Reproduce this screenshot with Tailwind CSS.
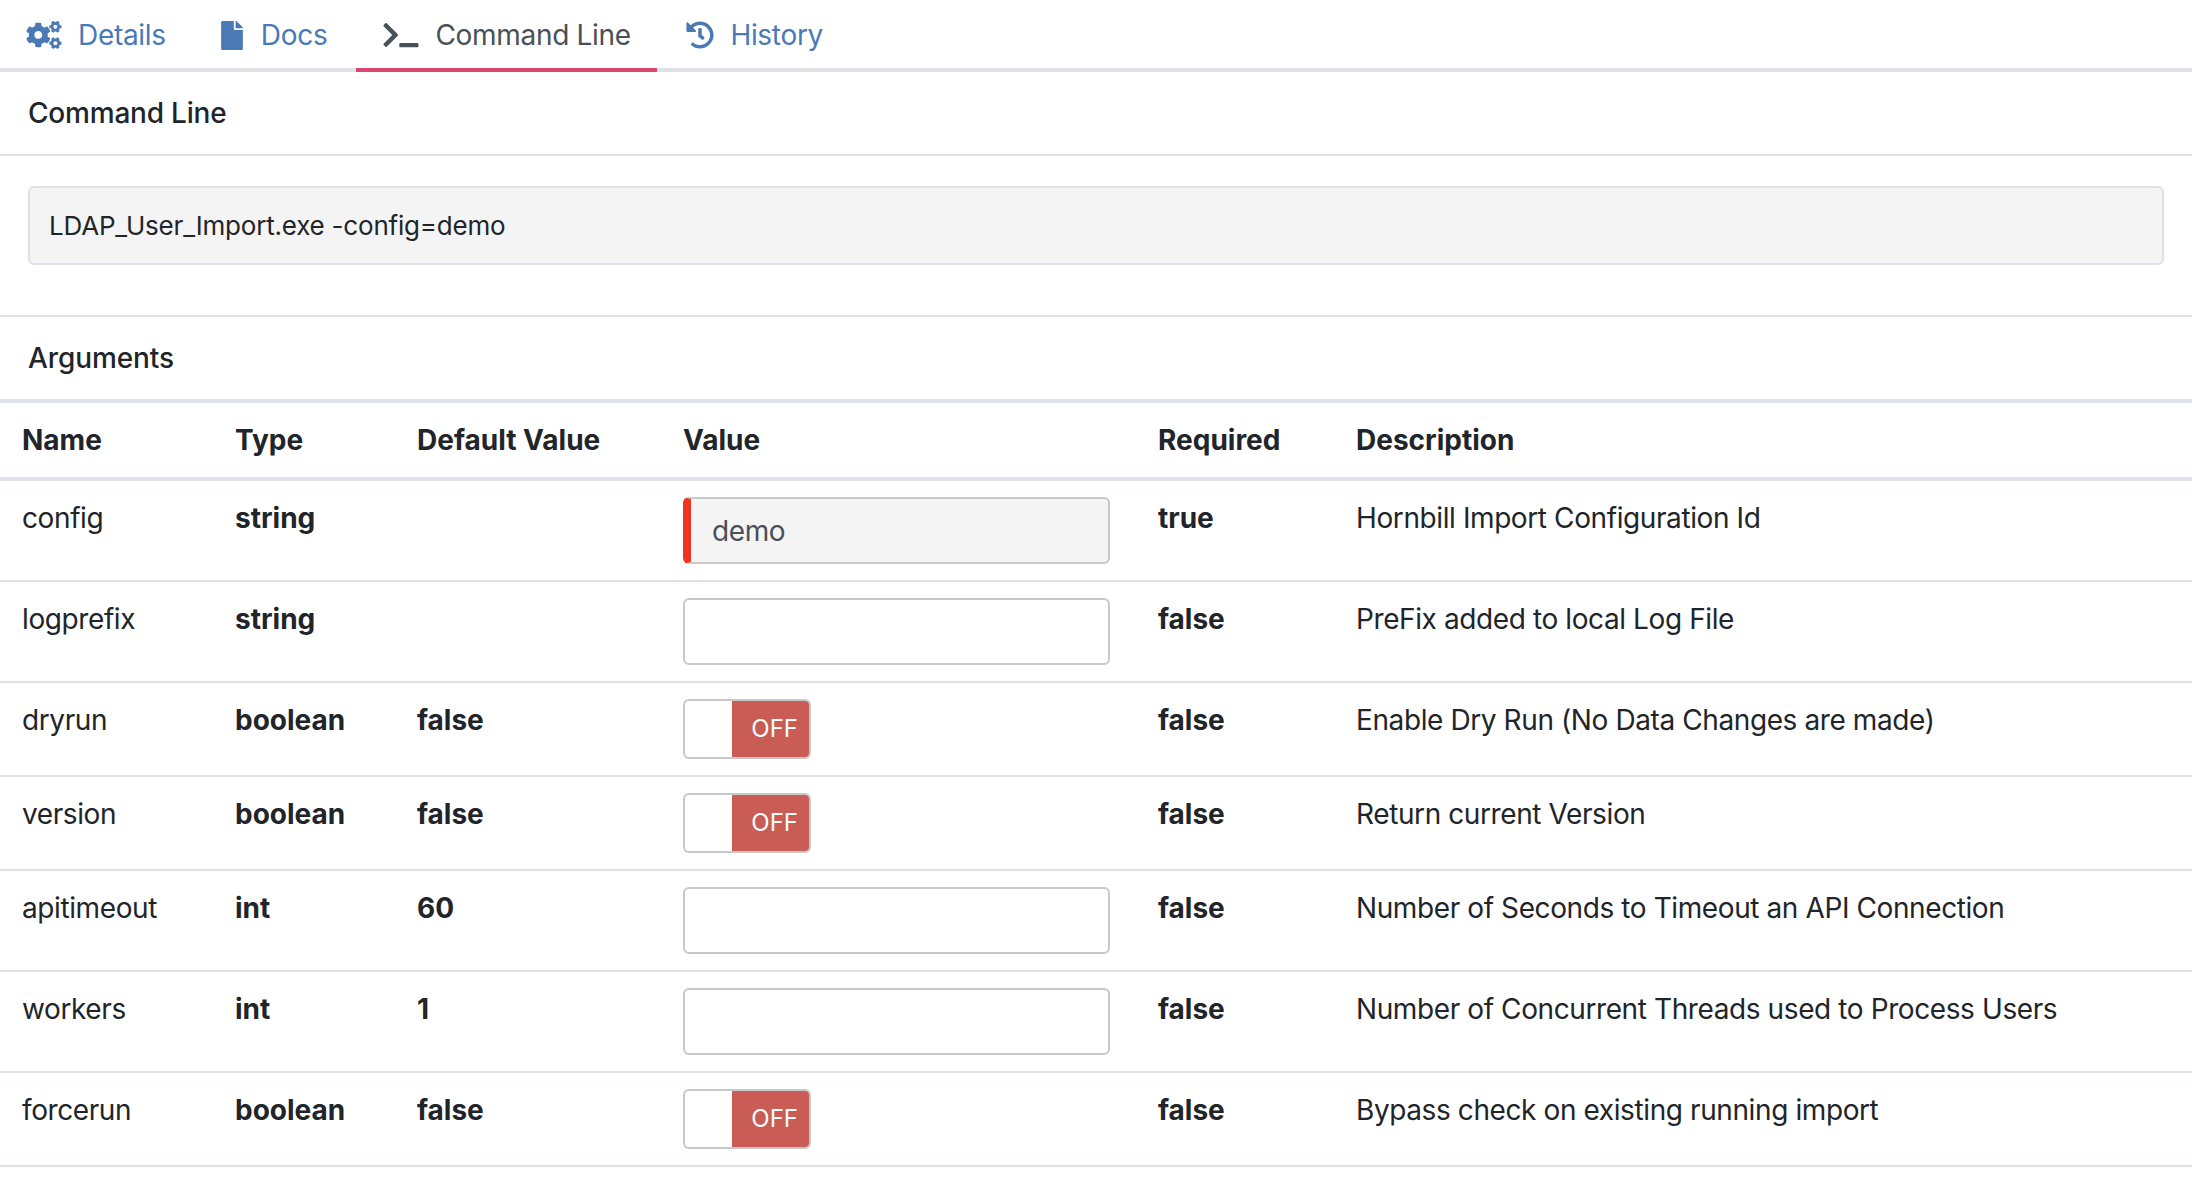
<!DOCTYPE html>
<html lang="en">
<head>
  <meta charset="UTF-8" />
  <title>Command Line</title>
  <script src="https://cdn.jsdelivr.net/npm/@tailwindcss/browser@4"></script>
</head>
<body class="bg-white text-[#212529] font-['Inter',sans-serif] text-[28px] leading-[42px]">

  <!-- tabs -->
  <div class="flex h-[72px] border-b-4 border-[#dee2e6] tracking-[-0.3px]">
    <a class="flex items-center h-[70px] pl-[26px] pr-[28px] gap-[16px] text-[#4a7ab5]">
      <svg class="w-[36px] h-[28px] fill-current" viewBox="0 0 640 512"><path d="M512.1 191l-8.2 14.3c-3 5.3-9.4 7.5-15.1 5.4-11.8-4.4-22.6-10.7-32.1-18.6-4.6-3.8-5.8-10.5-2.8-15.7l8.2-14.3c-6.9-8-12.3-17.3-15.9-27.4h-16.5c-6 0-11.2-4.3-12.2-10.3-2-12-2.1-24.6 0-37.1 1-6 6.2-10.4 12.2-10.4h16.5c3.6-10.1 9-19.4 15.9-27.4l-8.2-14.3c-3-5.2-1.9-11.9 2.8-15.7 9.5-7.9 20.4-14.2 32.1-18.6 5.7-2.1 12.1.1 15.1 5.4l8.2 14.3c10.5-1.9 21.2-1.9 31.7 0L552 6.3c3-5.3 9.4-7.5 15.1-5.4 11.8 4.4 22.6 10.7 32.1 18.6 4.6 3.8 5.8 10.5 2.8 15.7l-8.2 14.3c6.9 8 12.3 17.3 15.9 27.4h16.5c6 0 11.2 4.3 12.2 10.3 2 12 2.1 24.6 0 37.1-1 6-6.2 10.4-12.2 10.4h-16.5c-3.6 10.1-9 19.4-15.9 27.4l8.2 14.3c3 5.2 1.9 11.9-2.8 15.7-9.5 7.9-20.4 14.2-32.1 18.6-5.7 2.1-12.1-.1-15.1-5.4l-8.2-14.3c-10.4 1.9-21.2 1.9-31.7 0zm-10.5-58.8c38.5 29.6 82.4-14.3 52.8-52.8-38.5-29.7-82.4 14.3-52.8 52.8zM386.3 286.1l33.7 16.8c10.1 5.8 14.5 18.1 10.5 29.1-8.9 24.2-26.4 46.4-42.6 65.8-7.4 8.9-20.2 11.1-30.3 5.3l-29.1-16.8c-16 13.7-34.6 24.6-54.9 31.7v33.6c0 11.6-8.3 21.6-19.7 23.6-24.6 4.2-50.4 4.4-75.9 0-11.5-2-20-11.9-20-23.6V418c-20.3-7.2-38.9-18-54.9-31.7L74 403c-10 5.8-22.9 3.6-30.3-5.3-16.2-19.4-33.3-41.6-42.2-65.7-4-10.9.4-23.2 10.5-29.1l33.3-16.8c-3.9-20.9-3.9-42.4 0-63.4L12 205.8c-10.1-5.8-14.6-18.1-10.5-29 8.9-24.2 26-46.4 42.2-65.8 7.4-8.9 20.2-11.1 30.3-5.3l29.1 16.8c16-13.7 34.6-24.6 54.9-31.7V57.1c0-11.5 8.2-21.5 19.6-23.5 24.6-4.2 50.5-4.4 76-.1 11.5 2 20 11.9 20 23.6v33.6c20.3 7.2 38.9 18 54.9 31.7l29.1-16.8c10-5.8 22.9-3.6 30.3 5.3 16.2 19.4 33.2 41.6 42.1 65.8 4 10.9.1 23.2-10 29.1l-33.7 16.8c3.9 21 3.9 42.5 0 63.5zm-117.6 21.1c59.2-77-28.7-164.9-105.7-105.7-59.2 77 28.7 164.9 105.7 105.7zm243.4 182.7l-8.2 14.3c-3 5.3-9.4 7.5-15.1 5.4-11.8-4.4-22.6-10.7-32.1-18.6-4.6-3.8-5.8-10.5-2.8-15.7l8.2-14.3c-6.9-8-12.3-17.3-15.9-27.4h-16.5c-6 0-11.2-4.3-12.2-10.3-2-12-2.1-24.6 0-37.1 1-6 6.2-10.4 12.2-10.4h16.5c3.6-10.1 9-19.4 15.9-27.4l-8.2-14.3c-3-5.2-1.9-11.9 2.8-15.7 9.5-7.9 20.4-14.2 32.1-18.6 5.7-2.1 12.1.1 15.1 5.4l8.2 14.3c10.5-1.9 21.2-1.9 31.7 0l8.2-14.3c3-5.3 9.4-7.5 15.1-5.4 11.8 4.4 22.6 10.7 32.1 18.6 4.6 3.8 5.8 10.5 2.8 15.7l-8.2 14.3c6.9 8 12.3 17.3 15.9 27.4h16.5c6 0 11.2 4.3 12.2 10.3 2 12 2.1 24.6 0 37.1-1 6-6.2 10.4-12.2 10.4h-16.5c-3.6 10.1-9 19.4-15.9 27.4l8.2 14.3c3 5.2 1.9 11.9-2.8 15.7-9.5 7.9-20.4 14.2-32.1 18.6-5.7 2.1-12.1-.1-15.1-5.4l-8.2-14.3c-10.4 1.9-21.2 1.9-31.7 0zM501.6 431c38.5 29.6 82.4-14.3 52.8-52.8-38.5-29.6-82.4 14.3-52.8 52.8z"/></svg>
      <span>Details</span>
    </a>
    <a class="flex items-center h-[70px] pl-[27px] pr-[29px] gap-[18px] text-[#4a7ab5]">
      <svg class="w-[22px] h-[29px] fill-current" viewBox="0 0 384 512"><path d="M224 136V0H24C10.7 0 0 10.7 0 24v464c0 13.3 10.7 24 24 24h336c13.3 0 24-10.7 24-24V160H248c-13.2 0-24-10.8-24-24zm160-14.1v6.1H256V0h6.1c6.4 0 12.5 2.5 17 7l97.9 98c4.5 4.5 7 10.6 7 16.9z"/></svg>
      <span>Docs</span>
    </a>
    <a class="flex items-center h-[72px] w-[301px] pt-[2px] pl-[27px] gap-[16px] text-[#495057] border-b-4 border-[#d9476f]">
      <svg class="w-[36px] h-[28px] fill-current" viewBox="0 0 640 512"><path d="M257.981 272.971L63.638 467.314c-9.373 9.373-24.569 9.373-33.941 0L7.029 444.647c-9.357-9.357-9.375-24.522-.04-33.901L161.011 256 6.99 101.255c-9.335-9.379-9.317-24.544.04-33.901l22.667-22.667c9.373-9.373 24.569-9.373 33.941 0L257.981 239.03c9.373 9.372 9.373 24.568 0 33.941zM640 456v-32c0-13.255-10.745-24-24-24H312c-13.255 0-24 10.745-24 24v32c0 13.255 10.745 24 24 24h304c13.255 0 24-10.745 24-24z"/></svg>
      <span>Command Line</span>
    </a>
    <a class="flex items-center h-[70px] pl-[29px] gap-[16px] text-[#4a7ab5]">
      <svg class="w-[28px] h-[28px] fill-current" viewBox="0 0 512 512"><path d="M504 255.531c.253 136.64-111.18 248.372-247.82 248.468-59.015.042-113.223-20.53-155.822-54.911-11.077-8.94-11.905-25.541-1.839-35.607l11.267-11.267c8.609-8.609 22.353-9.551 31.891-1.984C173.062 425.135 212.781 440 256 440c101.705 0 184-82.311 184-184 0-101.705-82.311-184-184-184-48.814 0-93.149 18.969-126.068 49.932l50.754 50.754c10.08 10.08 2.941 27.314-11.313 27.314H24c-8.837 0-16-7.163-16-16V38.627c0-14.254 17.234-21.393 27.314-11.314l49.372 49.372C129.209 34.136 189.552 8 256 8c136.81 0 247.747 110.78 248 247.531zm-180.912 78.784l9.823-12.63c8.138-10.463 6.253-25.542-4.21-33.679L288 256.349V152c0-13.255-10.745-24-24-24h-16c-13.255 0-24 10.745-24 24v135.651l65.409 50.874c10.463 8.137 25.541 6.253 33.679-4.21z"/></svg>
      <span>History</span>
    </a>
  </div>

  <!-- command line -->
  <div class="h-[84px] px-[28px] flex items-center font-medium tracking-[-0.2px] border-b-2 border-[#dee2e6]">Command Line</div>
  <div class="h-[161px] px-[28px] pt-[30px] border-b-2 border-[#dee2e6]">
    <div class="h-[79px] flex items-center px-[19px] bg-[#f4f4f4] border-2 border-[#dee2e6] rounded-[6px] text-[26px] tracking-[-0.2px]">LDAP_User_Import.exe -config=demo</div>
  </div>

  <!-- arguments -->
  <div class="h-[82px] px-[28px] flex items-center font-medium tracking-[-0.1px]">Arguments</div>
  <table class="w-full table-fixed border-t-4 border-[#dee2e6]">
    <colgroup>
      <col class="w-[213px]" /><col class="w-[182px]" /><col class="w-[266px]" /><col class="w-[475px]" /><col class="w-[198px]" /><col />
    </colgroup>
    <thead>
      <tr class="border-b-4 border-[#dee2e6] text-left">
        <th class="px-[22px] py-[16px] font-bold">Name</th>
        <th class="px-[22px] py-[16px] font-bold">Type</th>
        <th class="px-[22px] py-[16px] font-bold">Default Value</th>
        <th class="px-[22px] py-[16px] font-bold">Value</th>
        <th class="px-[22px] py-[16px] font-bold">Required</th>
        <th class="px-[22px] py-[16px] font-bold">Description</th>
      </tr>
    </thead>
    <tbody class="tracking-[-0.4px]">
      <tr class="border-b-2 border-[#dee2e6] align-top">
        <td class="px-[22px] py-[16px]">config</td>
        <td class="px-[22px] py-[16px] font-bold tracking-normal">string</td>
        <td class="px-[22px] py-[16px] font-bold tracking-normal"></td>
        <td class="px-[22px] py-[16px]">
          <div class="w-[427px] h-[67px] flex items-center pl-[21px] bg-[#f4f4f4] border-2 border-l-[8px] border-[#c8c8c8] border-l-[#ee3524] rounded-[6px] text-[#495057]">demo</div>
        </td>
        <td class="px-[22px] py-[16px] font-bold tracking-normal">true</td>
        <td class="px-[22px] py-[16px]">Hornbill Import Configuration Id</td>
      </tr>
      <tr class="border-b-2 border-[#dee2e6] align-top">
        <td class="px-[22px] py-[16px]">logprefix</td>
        <td class="px-[22px] py-[16px] font-bold tracking-normal">string</td>
        <td class="px-[22px] py-[16px] font-bold tracking-normal"></td>
        <td class="px-[22px] py-[16px]"><div class="w-[427px] h-[67px] border-2 border-[#c8c8c8] rounded-[6px]"></div></td>
        <td class="px-[22px] py-[16px] font-bold tracking-normal">false</td>
        <td class="px-[22px] py-[16px]">PreFix added to local Log File</td>
      </tr>
      <tr class="border-b-2 border-[#dee2e6] align-top">
        <td class="px-[22px] py-[16px]">dryrun</td>
        <td class="px-[22px] py-[16px] font-bold tracking-normal">boolean</td>
        <td class="px-[22px] py-[16px] font-bold tracking-normal">false</td>
        <td class="px-[22px] py-[16px]">
          <div class="w-[128px] h-[60px] flex justify-end border-2 border-[#c8c8c8] rounded-[6px] overflow-hidden">
            <div class="w-[77px] bg-[#c95c54] text-white text-[24px] leading-[56px] text-right pr-[11px] tracking-normal">OFF</div>
          </div>
        </td>
        <td class="px-[22px] py-[16px] font-bold tracking-normal">false</td>
        <td class="px-[22px] py-[16px]">Enable Dry Run (No Data Changes are made)</td>
      </tr>
      <tr class="border-b-2 border-[#dee2e6] align-top">
        <td class="px-[22px] py-[16px]">version</td>
        <td class="px-[22px] py-[16px] font-bold tracking-normal">boolean</td>
        <td class="px-[22px] py-[16px] font-bold tracking-normal">false</td>
        <td class="px-[22px] py-[16px]">
          <div class="w-[128px] h-[60px] flex justify-end border-2 border-[#c8c8c8] rounded-[6px] overflow-hidden">
            <div class="w-[77px] bg-[#c95c54] text-white text-[24px] leading-[56px] text-right pr-[11px] tracking-normal">OFF</div>
          </div>
        </td>
        <td class="px-[22px] py-[16px] font-bold tracking-normal">false</td>
        <td class="px-[22px] py-[16px]">Return current Version</td>
      </tr>
      <tr class="border-b-2 border-[#dee2e6] align-top">
        <td class="px-[22px] py-[16px]">apitimeout</td>
        <td class="px-[22px] py-[16px] font-bold tracking-normal">int</td>
        <td class="px-[22px] py-[16px] font-bold tracking-normal">60</td>
        <td class="px-[22px] py-[16px]"><div class="w-[427px] h-[67px] border-2 border-[#c8c8c8] rounded-[6px]"></div></td>
        <td class="px-[22px] py-[16px] font-bold tracking-normal">false</td>
        <td class="px-[22px] py-[16px]">Number of Seconds to Timeout an API Connection</td>
      </tr>
      <tr class="border-b-2 border-[#dee2e6] align-top">
        <td class="px-[22px] py-[16px]">workers</td>
        <td class="px-[22px] py-[16px] font-bold tracking-normal">int</td>
        <td class="px-[22px] py-[16px] font-bold tracking-normal">1</td>
        <td class="px-[22px] py-[16px]"><div class="w-[427px] h-[67px] border-2 border-[#c8c8c8] rounded-[6px]"></div></td>
        <td class="px-[22px] py-[16px] font-bold tracking-normal">false</td>
        <td class="px-[22px] py-[16px]">Number of Concurrent Threads used to Process Users</td>
      </tr>
      <tr class="border-b-2 border-[#dee2e6] align-top">
        <td class="px-[22px] py-[16px]">forcerun</td>
        <td class="px-[22px] py-[16px] font-bold tracking-normal">boolean</td>
        <td class="px-[22px] py-[16px] font-bold tracking-normal">false</td>
        <td class="px-[22px] py-[16px]">
          <div class="w-[128px] h-[60px] flex justify-end border-2 border-[#c8c8c8] rounded-[6px] overflow-hidden">
            <div class="w-[77px] bg-[#c95c54] text-white text-[24px] leading-[56px] text-right pr-[11px] tracking-normal">OFF</div>
          </div>
        </td>
        <td class="px-[22px] py-[16px] font-bold tracking-normal">false</td>
        <td class="px-[22px] py-[16px]">Bypass check on existing running import</td>
      </tr>
    </tbody>
  </table>
</body>
</html>
